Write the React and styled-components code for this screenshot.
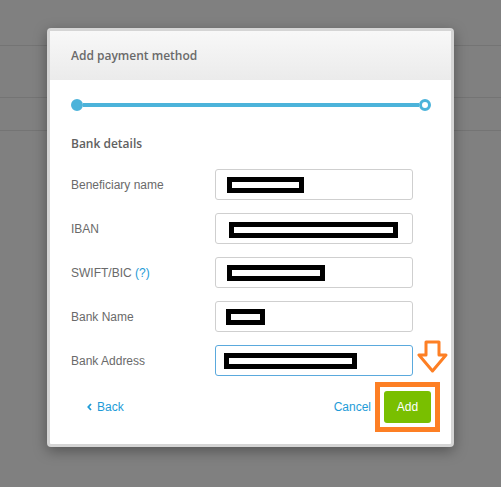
import React from 'react'
import styled, { createGlobalStyle } from 'styled-components'

const Global = createGlobalStyle`
  body {
    margin: 0;
    background-color: #808080;
    background-image:
      linear-gradient(#747474, #747474),
      linear-gradient(#747474, #747474),
      linear-gradient(#747474, #747474);
    background-size: 100% 1px;
    background-position: 0 45px, 0 97px, 0 130px;
    background-repeat: no-repeat;
    font-family: "Liberation Sans", Arial, sans-serif;
  }
`;

const Page = styled.div`
  min-height: 487px;
  padding: 28px 0 0 47px;
  box-sizing: border-box;
`;

const Dialog = styled.div`
  width: 407px;
  box-sizing: border-box;
  border: 3px solid #d5d5d5;
  border-radius: 4px;
  background: #fff;
  box-shadow: 0 4px 14px rgba(0, 0, 0, 0.35);
`;

const Header = styled.div`
  height: 49px;
  display: flex;
  align-items: center;
  padding-left: 21px;
  background: linear-gradient(#f8f8f8, #ebebeb);
  font-family: "Open Sans", sans-serif;
  font-weight: 600;
  font-size: 12px;
  color: #6a6a6a;
`;

const Body = styled.div`
  padding: 0 20px 0 21px;
`;

const Progress = styled.div`
  margin-top: 19px;
  height: 12px;
  display: flex;
  align-items: center;
`;

const Dot = styled.span`
  width: 12px;
  height: 12px;
  box-sizing: border-box;
  border-radius: 50%;
  background: ${p => (p.$hollow ? '#fff' : '#4cb3da')};
  border: 3px solid #4cb3da;
`;

const Track = styled.span`
  flex: 1;
  height: 4px;
  background: #4cb3da;
`;

const Section = styled.div`
  margin-top: 25px;
  line-height: 16px;
  font-family: "Open Sans", sans-serif;
  font-weight: 600;
  font-size: 12px;
  color: #616161;
`;

const Form = styled.div`
  margin-top: 17px;
  display: grid;
  grid-template-columns: 144px 198px;
  row-gap: 13px;
  align-items: center;
`;

const Label = styled.div`
  font-size: 12px;
  color: #6a6a6a;
`;

const Help = styled.span`
  color: #1e9bd7;
`;

const Field = styled.div`
  height: 31px;
  box-sizing: border-box;
  border: 1px solid ${p => (p.$focus ? '#5aa9dd' : '#cfcfcf')};
  border-radius: 3px;
  display: flex;
  align-items: center;
  padding-top: ${p => p.$drop || 0}px;
`;

const Redact = styled.span`
  width: ${p => p.$w}px;
  height: 6px;
  margin-left: ${p => p.$x}px;
  border: 5px solid #000;
  box-sizing: content-box;
  background: #fff;
  flex: none;
`;

const Footer = styled.div`
  margin-top: 6px;
  padding: 0 11px 12px 37px;
  display: flex;
  align-items: center;
`;

const LinkButton = styled.span`
  font-size: 12px;
  color: #1e9bd7;
  display: flex;
  align-items: center;
  gap: 5px;
`;

const Spacer = styled.div`
  flex: 1;
`;

const Highlight = styled.div`
  position: relative;
  margin-left: 4px;
  border: 5px solid #fd7f24;
  padding: 4px;
`;

const Arrow = styled.svg`
  position: absolute;
  left: 37px;
  top: -47px;
`;

const AddButton = styled.div`
  width: 47px;
  height: 32px;
  border-radius: 3px;
  background: #79bf00;
  color: #fff;
  font-size: 12px;
  display: flex;
  align-items: center;
  justify-content: center;
`;

const rows = [
  { label: 'Beneficiary name', x: 11, w: 67 },
  { label: 'IBAN', x: 13, w: 159, drop: 3 },
  { label: 'SWIFT/BIC', help: true, x: 11, w: 88 },
  { label: 'Bank Name', x: 10, w: 29 },
  { label: 'Bank Address', x: 8, w: 123, focus: true },
]

export default function App() {
  return (
    <Page>
      <Global />
      <Dialog>
        <Header>Add payment method</Header>
        <Body>
          <Progress>
            <Dot />
            <Track />
            <Dot $hollow />
          </Progress>
          <Section>Bank details</Section>
          <Form>
            {rows.map(r => (
              <React.Fragment key={r.label}>
                <Label>
                  {r.label}
                  {r.help && <Help> (?)</Help>}
                </Label>
                <Field $focus={r.focus} $drop={r.drop}>
                  <Redact $x={r.x} $w={r.w} />
                </Field>
              </React.Fragment>
            ))}
          </Form>
        </Body>
        <Footer>
          <LinkButton>
            <svg width="5" height="8" viewBox="0 0 5 8">
              <path d="M4 1 L1.3 4 L4 7" fill="none" stroke="#1e9bd7" strokeWidth="1.8" />
            </svg>
            Back
          </LinkButton>
          <Spacer />
          <LinkButton>Cancel</LinkButton>
          <Highlight>
            <Arrow width="31" height="33" viewBox="0 0 31 33">
              <path
                d="M9 2 H22 V15 H29 L15.5 31 L2 15 H9 Z"
                fill="#fff"
                stroke="#fd7f24"
                strokeWidth="3"
                strokeLinejoin="round"
              />
            </Arrow>
            <AddButton>Add</AddButton>
          </Highlight>
        </Footer>
      </Dialog>
    </Page>
  )
}
